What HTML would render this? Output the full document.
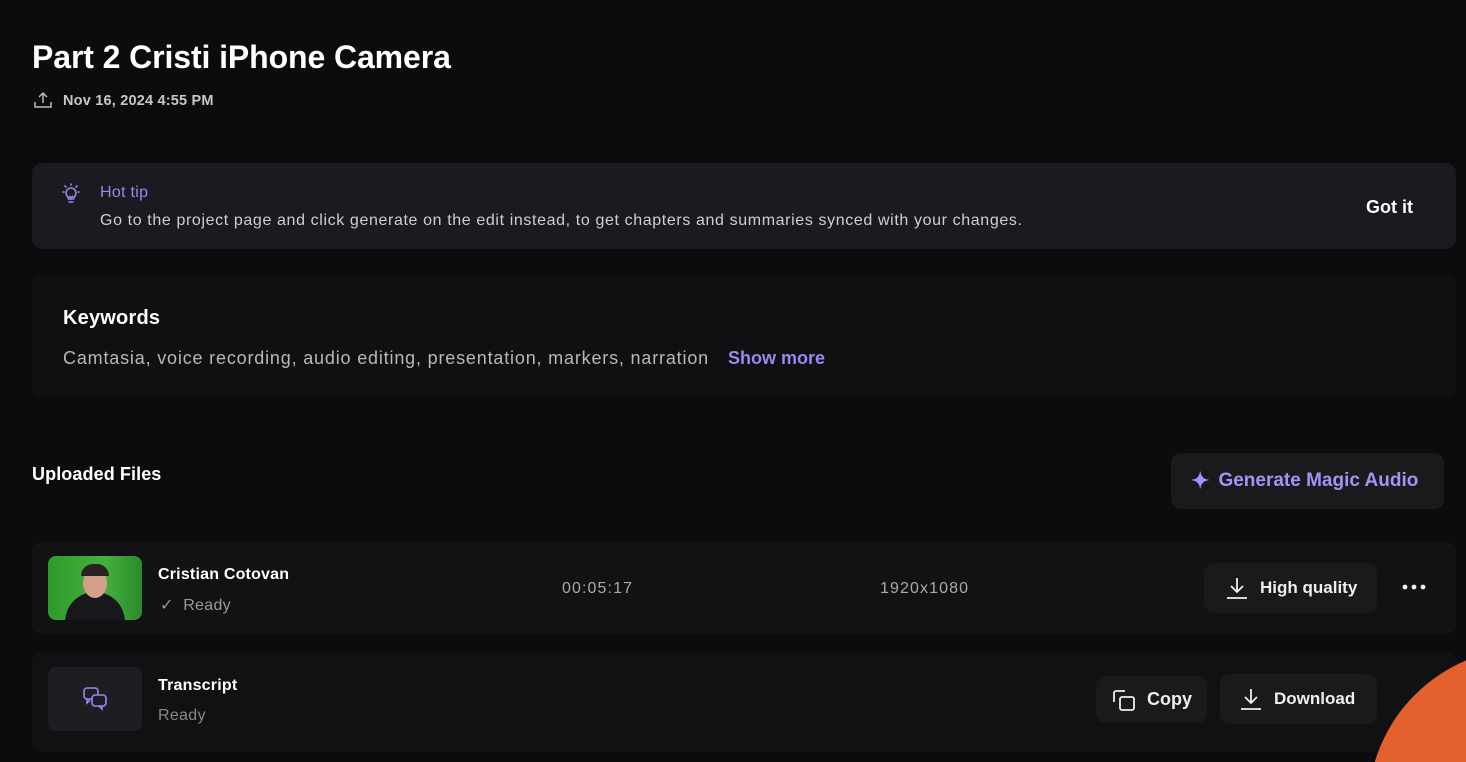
<!DOCTYPE html>
<html><head><style>
*{margin:0;padding:0;box-sizing:border-box}
html,body{width:1466px;height:762px;overflow:hidden}
body{background:#0c0c0e;font-family:"Liberation Sans",sans-serif;color:#fff;position:relative}
.a{position:absolute}
.btn{position:absolute;background:#1a1a1c;border-radius:10px;display:flex;align-items:center;font-weight:bold;font-size:18px;color:#eee}
</style></head><body>
<div class="a" style="left:32px;top:39px;font-size:32px;font-weight:bold;letter-spacing:-.1px">Part 2 Cristi iPhone Camera</div>
<svg class="a" style="left:33px;top:90px" width="20" height="20" viewBox="0 0 20 20" fill="none" stroke="#bbb" stroke-width="1.5"><path d="M10 13V3M6 7l4-4 4 4M2 12v5h16v-5"/></svg>
<div class="a" style="left:63px;top:93px;font-size:14.5px;color:#c8c8c8;font-weight:bold;letter-spacing:.2px">Nov 16, 2024 4:55 PM</div>

<div class="a" style="left:32px;top:163px;width:1424px;height:86px;background:#1b1a21;border-radius:10px"></div>
<svg class="a" style="left:58px;top:181px" width="26" height="26" viewBox="0 0 26 26" fill="none" stroke="#9b87f0" stroke-width="1.6"><path d="M9 15a5 5 0 1 1 8 0c-1 1-1.5 2-1.5 3h-5c0-1-.5-2-1.5-3zM10.5 21h5M11 15l2 2 2-2M13 17v1"/><path d="M13 3v1M5 11h1M20 11h1M7 5l1 1M19 5l-1 1" stroke-linecap="round"/></svg>
<div class="a" style="left:100px;top:184px;font-size:16px;color:#9b87f0;letter-spacing:.3px">Hot tip</div>
<div class="a" style="left:100px;top:212px;font-size:16px;color:#cfcfcf;letter-spacing:.62px">Go to the project page and click generate on the edit instead, to get chapters and summaries synced with your changes.</div>
<div class="a" style="left:1366px;top:197px;font-size:18px;font-weight:bold">Got it</div>

<div class="a" style="left:32px;top:275px;width:1424px;height:122px;background:#101012;border-radius:10px"></div>
<div class="a" style="left:63px;top:307px;font-size:20px;font-weight:bold;letter-spacing:.2px">Keywords</div>
<div class="a" style="left:63px;top:348px;font-size:18px;color:#b8b8b8;letter-spacing:.82px">Camtasia, voice recording, audio editing, presentation, markers, narration</div>
<div class="a" style="left:728px;top:348px;font-size:18px;color:#9b87f0;font-weight:bold">Show more</div>

<div class="a" style="left:32px;top:464px;font-size:18px;font-weight:bold;letter-spacing:.1px">Uploaded Files</div>
<div class="btn" style="left:1171px;top:453px;width:273px;height:56px;color:#a592f5;font-size:19px;letter-spacing:0"><span style="margin-left:20px;margin-right:9px;font-size:22px">✦</span>Generate Magic Audio</div>

<div class="a" style="left:32px;top:542px;width:1424px;height:92px;background:#121214;border-radius:10px"></div>
<div class="a" style="left:48px;top:556px;width:94px;height:64px;border-radius:8px;overflow:hidden;background:linear-gradient(90deg,#2f9a2c,#46b03e 60%,#2a8a2a)">
<div class="a" style="left:17px;top:36px;width:60px;height:40px;border-radius:30px 30px 0 0;background:#18181c"></div>
<div class="a" style="left:35px;top:12px;width:24px;height:30px;border-radius:50%;background:#d3a08a"></div>
<div class="a" style="left:33px;top:8px;width:28px;height:12px;border-radius:12px 12px 0 0;background:#2a2420"></div>
</div>
<div class="a" style="left:158px;top:566px;font-size:16px;font-weight:bold;letter-spacing:.2px">Cristian Cotovan</div>
<div class="a" style="left:160px;top:595px;font-size:16px;color:#999;letter-spacing:.3px">✓&nbsp; Ready</div>
<div class="a" style="left:562px;top:580px;font-size:16px;color:#aaa;letter-spacing:1.1px">00:05:17</div>
<div class="a" style="left:880px;top:580px;font-size:16px;color:#aaa;letter-spacing:1.1px">1920x1080</div>
<div class="btn" style="left:1204px;top:563px;width:173px;height:50px;font-size:17px"><svg style="margin:0 12px 0 22px" width="22" height="24" viewBox="0 0 22 24" fill="none" stroke="#eee" stroke-width="1.8"><path d="M11 2v14M5 10l6 6 6-6M1 22h20"/></svg>High quality</div>
<svg class="a" style="left:1402px;top:583px" width="24" height="8" viewBox="0 0 24 8" fill="#eee"><circle cx="3" cy="4" r="2.4"/><circle cx="12" cy="4" r="2.4"/><circle cx="21" cy="4" r="2.4"/></svg>

<div class="a" style="left:32px;top:652px;width:1424px;height:100px;background:#111113;border-radius:10px"></div>
<div class="a" style="left:48px;top:667px;width:94px;height:64px;border-radius:8px;background:#1e1e22"></div>
<svg class="a" style="left:82px;top:686px" width="26" height="26" viewBox="0 0 26 26" fill="none" stroke="#9b87f0" stroke-width="1.6"><rect x="2" y="2" width="14" height="11" rx="3"/><path d="M5 13v4l3-3"/><rect x="10" y="9" width="14" height="11" rx="3" fill="#1e1e22"/><path d="M20 20v3l-3-3"/></svg>
<div class="a" style="left:158px;top:677px;font-size:16px;font-weight:bold;letter-spacing:.2px">Transcript</div>
<div class="a" style="left:158px;top:707px;font-size:16px;color:#888;letter-spacing:.3px">Ready</div>
<div class="btn" style="left:1096px;top:676px;width:111px;height:47px"><svg style="margin:0 10px 0 15px" width="26" height="26" viewBox="0 0 26 26" fill="none" stroke="#eee" stroke-width="1.8"><path d="M14 4H5a2 2 0 0 0-2 2v9"/><rect x="9" y="10" width="14" height="13" rx="2"/></svg>Copy</div>
<div class="btn" style="left:1220px;top:674px;width:157px;height:50px;font-size:17px"><svg style="margin:0 12px 0 20px" width="22" height="24" viewBox="0 0 22 24" fill="none" stroke="#eee" stroke-width="1.8"><path d="M11 2v14M5 10l6 6 6-6M1 22h20"/></svg>Download</div>
<div class="a" style="left:1368px;top:648px;width:320px;height:320px;border-radius:50%;background:#e2612c"></div>
</body></html>
